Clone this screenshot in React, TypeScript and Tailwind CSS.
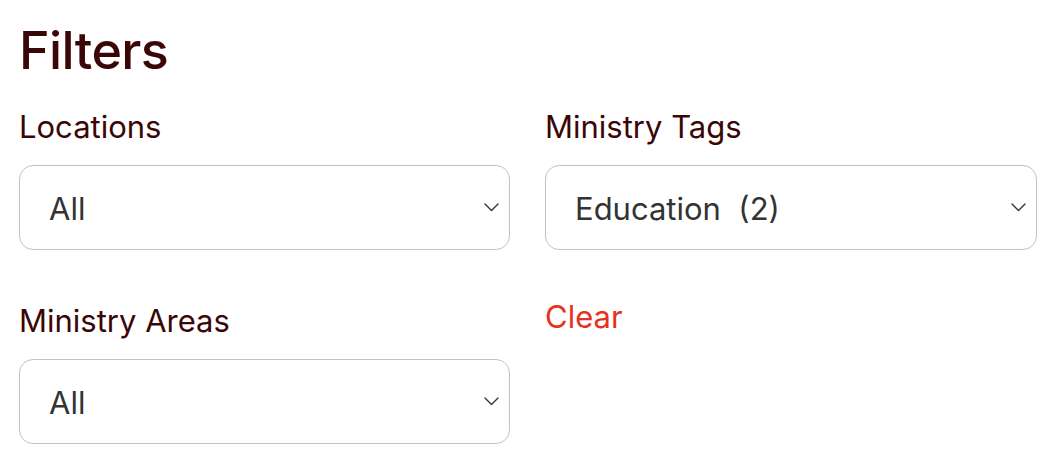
const font = { fontFamily: "Inter, 'Noto Sans', sans-serif" };

type FieldProps = { label: string; value: string };

const Chevron = () => (
  <svg width="15" height="9" viewBox="0 0 15 9" fill="none" className="shrink-0">
    <path d="M1 1l6.5 6.5L14 1" stroke="#333333" strokeWidth="1.4" strokeLinecap="round" strokeLinejoin="round" />
  </svg>
);

const Field = ({ label, value }: FieldProps) => (
  <div className="flex flex-col">
    <label className="text-[31px] leading-[36px] text-[#3b0606]">{label}</label>
    <div className="mt-[20px] h-[85px] rounded-[14px] border-[1.5px] border-[#c2c2c2] bg-white flex items-center justify-between pl-[29px] pr-[10px]">
      <span className="pt-[4px] text-[31px] text-[#333333] whitespace-pre">{value}</span>
      <Chevron />
    </div>
  </div>
);

export default function App() {
  return (
    <div className="bg-white min-h-screen px-[19px] pt-[25px]" style={font}>
      <h2 className="text-[52px] leading-none font-medium tracking-[-0.6px] text-[#3b0606]">Filters</h2>
      <div className="mt-[32px] grid grid-cols-[491px_492px] gap-x-[35px] gap-y-[53px]">
        <Field label="Locations" value="All" />
        <Field label="Ministry Tags" value="Education  (2)" />
        <Field label="Ministry Areas" value="All" />
        <div>
          <button className="text-[31px] leading-[36px] text-[#e8311d] -mt-[4px]">Clear</button>
        </div>
      </div>
    </div>
  );
}
